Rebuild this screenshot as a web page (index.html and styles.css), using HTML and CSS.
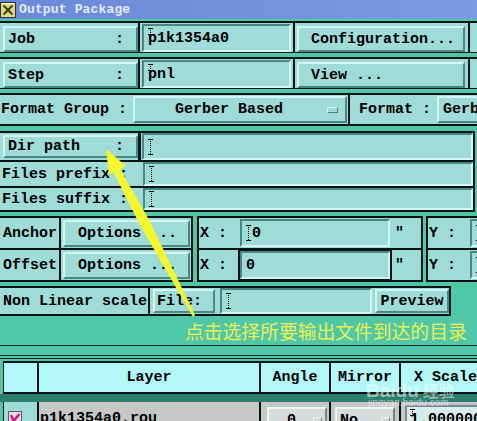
FILE: index.html
```html
<!DOCTYPE html>
<html>
<head>
<meta charset="utf-8">
<link rel="stylesheet" href="styles.css">
</head>
<body>
<div class="titlebar">
  <svg class="ticon" width="17" height="17" viewBox="0 0 17 17">
    <rect x="0.5" y="1.5" width="15" height="15" fill="#e2da74" stroke="#26324c"/>
    <path d="M1.5 2.5 H14.5" stroke="#fffbd0"/>
    <path d="M3.5 4.5 L12.5 13.5 M12.5 4.5 L3.5 13.5" stroke="#3c3c14" stroke-width="2"/>
  </svg>
  <span class="ttext">Output Package</span>
</div>

<div class="row r1">
  <div class="cell c-lbl"><div class="btn lbtn"><span>Job</span><span>:</span></div></div>
  <div class="cell c-fld"><div class="field tfield"><i class="caret over"></i>p1k1354a0</div></div>
  <div class="cell c-act"><div class="btn abtn">Configuration...</div></div>
  <div class="cell c-stub"></div>
</div>

<div class="row r2">
  <div class="cell c-lbl"><div class="btn lbtn"><span>Step</span><span>:</span></div></div>
  <div class="cell c-fld"><div class="field tfield"><i class="caret over"></i>pnl</div></div>
  <div class="cell c-act"><div class="btn abtn">View ...</div></div>
  <div class="cell c-stub"></div>
</div>

<div class="row fmt">
  <div class="cell fg">
    <span class="fglabel">Format Group :</span>
    <div class="btn opt"><span>Gerber Based</span><i class="ind"></i></div>
  </div>
  <div class="cell fm">
    <span class="fmlabel">Format :</span>
    <div class="btn opt2">Gerber Based</div>
  </div>
</div>

<div class="paths">
  <div class="prow dir">
    <div class="dirl"><div class="btn lbtn dbtn"><span>Dir path</span><span>:</span></div></div>
    <div class="field pf"><i class="caret"></i></div>
  </div>
  <div class="prow pre">
    <div class="pl">Files prefix :</div>
    <div class="field pf"><i class="caret"></i></div>
  </div>
  <div class="prow suf">
    <div class="pl">Files suffix :</div>
    <div class="field pf"><i class="caret"></i></div>
  </div>
</div>

<div class="anchors">
  <div class="ablock a1">
    <div class="arow"><div class="alabel">Anchor</div><div class="aopt"><div class="btn obtn">Options ...</div></div></div>
    <div class="arow"><div class="alabel">Offset</div><div class="aopt"><div class="btn obtn">Options ...</div></div></div>
  </div>
  <div class="ablock a2">
    <div class="arow"><span class="xl">X :</span><div class="field xf"><i class="caret"></i>0</div><span class="inch">"</span></div>
    <div class="arow"><span class="xl">X :</span><div class="field xf focus">0</div><span class="inch">"</span></div>
  </div>
  <div class="ablock a3">
    <div class="arow"><span class="yl">Y :</span><div class="field yf"><i class="caret"></i></div></div>
    <div class="arow"><span class="yl">Y :</span><div class="field yf"><i class="caret"></i></div></div>
  </div>
</div>

<div class="nls">
  <div class="nlabel">Non Linear scale</div>
  <div class="btn fbtn">File:</div>
  <div class="field nf"><i class="caret"></i></div>
  <div class="btn pbtn">Preview</div>
</div>

<div class="hint">点击选择所要输出文件到达的目录</div>

<div class="rule ra"></div>
<div class="rule rb"></div>
<div class="rule rc"></div>

<div class="thead">
  <div class="tc tc-chk"></div>
  <div class="tc tc-layer">Layer</div>
  <div class="tc tc-angle">Angle</div>
  <div class="tc tc-mirror">Mirror</div>
  <div class="tc tc-x">X Scale</div>
</div>
<div class="tgap"></div>
<div class="trow">
  <div class="td td-chk">
    <svg class="chk" width="14" height="14" viewBox="0 0 14 14">
      <rect x="0.5" y="0.5" width="13" height="13" fill="#e6dcea" stroke="#6a506a"/>
      <path d="M3 4 L5.5 10 L11.5 3" fill="none" stroke="#d8106a" stroke-width="2.4"/>
    </svg>
  </div>
  <div class="td td-layer">p1k1354a0.rou</div>
  <div class="td td-angle"><div class="btn gbtn abtn2">0<i class="ind gind"></i></div></div>
  <div class="td td-mirror"><div class="btn gbtn mbtn">No<i class="ind gind"></i></div></div>
  <div class="td td-x"><div class="field xsf"><i class="caret over"></i>1.000000</div></div>
</div>

<svg class="arrow" width="477" height="421" viewBox="0 0 477 421">
  <polygon points="106,149 126,166 109,175" fill="#f6f62c"/>
  <polygon points="120,169 149,220 195,315 193,317 140,225 114,173" fill="#f6f62c"/>
</svg>

<div class="wm"><span class="wm-b">Baidu</span><span class="wm-j">经验</span></div>
<div class="wm2">jingyan.baidu.com</div>
</body>
</html>
```

FILE: styles.css
```css
:root {
  --teal: #50c8a8;
  --panel: #9fdcd8;
  --hi: #d2f6f2;
  --sh: #4a8682;
  --blk: #081414;
}
* { box-sizing: border-box; }
body {
  margin: 0;
  width: 477px;
  height: 421px;
  overflow: hidden;
  position: relative;
  background: var(--teal);
  font: bold 15px "Liberation Mono", "DejaVu Sans Mono", monospace;
  color: #000;
}
i { font-style: normal; }

/* title bar */
.titlebar {
  height: 19px;
  display: flex;
  align-items: center;
  gap: 2px;
  background: linear-gradient(90deg, #6a8ad8, #7a9ae2);
  color: #e4eaff;
  font-size: 13px;
  letter-spacing: 0.15px;
}
.ticon { flex-shrink: 0; }

/* generic widgets */
.btn {
  display: flex;
  align-items: center;
  background: var(--panel);
  border: 2px solid;
  border-color: var(--hi) var(--sh) var(--sh) var(--hi);
  white-space: pre;
  flex-shrink: 0;
}
.field {
  display: flex;
  align-items: center;
  background: var(--panel);
  border: 2px solid;
  border-color: var(--sh) var(--hi) var(--hi) var(--sh);
  padding-left: 4px;
  white-space: pre;
  flex-shrink: 0;
}
.caret {
  display: inline-block;
  width: 5px;
  height: 16px;
  margin-right: 1px;
  background:
    linear-gradient(#000, #000) top / 5px 1px no-repeat,
    linear-gradient(#000, #000) bottom / 5px 1px no-repeat,
    repeating-linear-gradient(#000 0 1px, transparent 1px 2px) center / 1px 100% no-repeat;
}
.caret.over {
  height: 7px;
  align-self: flex-start;
  margin-top: 2px;
  margin-right: -5px;
}
.ind {
  position: absolute;
  width: 11px;
  height: 6px;
  background: var(--panel);
  border: 1px solid;
  border-color: var(--hi) var(--sh) var(--sh) var(--hi);
}

/* rows 1 and 2 */
.row {
  display: flex;
  background: var(--panel);
  border-top: 2px solid var(--blk);
  border-bottom: 1px solid var(--blk);
}
.r1 { margin-top: 2px; }
.r2 { margin-top: 4px; }
.cell {
  border-right: 2px solid var(--blk);
  flex-shrink: 0;
}
.c-lbl { width: 140px; padding: 3px 0 0 3px; }
.c-fld { width: 155px; padding: 1px 2px 0 2px; }
.c-act { width: 175px; padding: 3px 3px 0 2px; }
.c-stub { flex: 1; border-right: 0; }
.lbtn {
  height: 26px;
  justify-content: space-between;
  padding: 0 12px 0 3px;
}
.tfield { height: 28px; }
.abtn { height: 26px; padding-left: 12px; }

/* format group row */
.fmt {
  margin-top: 4px;
  border-bottom: 2px solid var(--blk);
  height: 33px;
}
.fg {
  width: 350px;
  display: flex;
  align-items: center;
  padding-left: 1px;
}
.fglabel { width: 132px; flex-shrink: 0; }
.opt {
  position: relative;
  width: 214px;
  height: 27px;
  padding-left: 40px;
}
.opt .ind { left: 192px; top: 9px; }
.fm {
  flex: 1;
  display: flex;
  align-items: center;
  padding-left: 9px;
  border-right: 0;
}
.fmlabel { width: 78px; flex-shrink: 0; }
.opt2 { width: 214px; height: 27px; padding-left: 4px; }

/* path rows */
.paths {
  margin-top: 5px;
  width: 475px;
  background: var(--panel);
  border-top: 2px solid var(--blk);
  border-right: 2px solid var(--blk);
}
.prow {
  display: flex;
  align-items: center;
  border-bottom: 2px solid var(--blk);
}
.dir { height: 29px; }
.pre { height: 26px; }
.suf { height: 24px; }
.dirl {
  width: 141px;
  height: 100%;
  border-right: 3px solid var(--blk);
  padding: 2px 0 0 3px;
  flex-shrink: 0;
}
.dbtn { height: 23px; }
.pl {
  width: 142px;
  padding-left: 2px;
  flex-shrink: 0;
}
.pf {
  flex: 1;
  height: 100%;
  margin-left: 1px;
}

/* anchor / offset */
.anchors { display: flex; margin-top: 4px; }
.ablock {
  background: var(--panel);
  border-top: 2px solid var(--blk);
  border-bottom: 2px solid var(--blk);
  flex-shrink: 0;
}
.arow {
  display: flex;
  align-items: center;
  height: 30px;
}
.arow + .arow { border-top: 2px solid var(--blk); height: 32px; }
.a1 { width: 193px; border-right: 2px solid var(--blk); }
.alabel {
  width: 61px;
  height: 100%;
  display: flex;
  align-items: center;
  padding-left: 3px;
  border-right: 2px solid var(--blk);
  flex-shrink: 0;
}
.aopt { padding: 0 1px 0 2px; }
.obtn { width: 127px; height: 27px; padding-left: 13px; }
.a2 {
  margin-left: 4px;
  width: 226px;
  border-left: 2px solid var(--blk);
  border-right: 2px solid var(--blk);
}
.xl { width: 41px; padding-left: 1px; flex-shrink: 0; }
.xf { width: 150px; height: 28px; }
.focus { box-shadow: 0 0 0 2px var(--blk); }
.inch { margin-left: 5px; }
.a3 {
  margin-left: 3px;
  flex: 1;
  border-left: 2px solid var(--blk);
}
.yl { width: 42px; padding-left: 1px; flex-shrink: 0; }
.yf { width: 60px; height: 28px; }

/* non linear scale */
.nls {
  margin-top: 4px;
  width: 451px;
  height: 30px;
  display: flex;
  align-items: center;
  background: var(--panel);
  border-top: 2px solid var(--blk);
  border-bottom: 2px solid var(--blk);
  border-right: 2px solid var(--blk);
}
.nlabel {
  width: 150px;
  height: 100%;
  display: flex;
  align-items: center;
  padding-left: 3px;
  border-right: 2px solid var(--blk);
  flex-shrink: 0;
}
.fbtn { margin-left: 3px; width: 62px; height: 24px; padding-left: 2px; }
.nf { margin-left: 5px; width: 152px; height: 26px; }
.pbtn { margin-left: 3px; width: 74px; height: 24px; justify-content: center; }

/* hint */
.hint {
  margin-top: 1px;
  padding-left: 185px;
  height: 24px;
  line-height: 24px;
  font: 400 18.8px "Noto Sans CJK SC", sans-serif;
  color: #eef052;
  white-space: nowrap;
}

/* rules */
.rule { height: 1px; background: #0c2424; }
.ra { margin-top: 4px; }
.rb { margin-top: 9px; }
.rc { margin-top: 2px; }

/* table */
.thead {
  display: flex;
  margin: 2px 0 0 3px;
  height: 33px;
  background: #b2f8f8;
  border-top: 2px solid var(--blk);
  border-left: 1px solid var(--blk);
  border-bottom: 2px solid var(--blk);
}
.tc {
  display: flex;
  align-items: center;
  justify-content: center;
  border-right: 2px solid var(--blk);
  flex-shrink: 0;
}
.tc-chk, .td-chk { width: 35px; }
.tc-layer, .td-layer { width: 222px; }
.tc-angle, .td-angle { width: 70px; }
.tc-mirror, .td-mirror { width: 70px; }
.tc-x { flex: 1; justify-content: flex-start; padding-left: 13px; border-right: 0; }
.tgap { height: 8px; background: #2e7e6e; }
.trow {
  display: flex;
  margin-left: 3px;
  height: 30px;
  background: #c6c8c8;
  border-left: 1px solid var(--blk);
}
.td {
  border-right: 2px solid var(--blk);
  flex-shrink: 0;
  height: 100%;
}
.td-chk { background: var(--panel); padding: 9px 0 0 4px; }
.chk { display: block; }
.td-layer { padding: 8px 0 0 1px; line-height: 17px; }
.gbtn {
  position: relative;
  width: 60px;
  height: 26px;
  margin-top: 5px;
  background: #d6dcdc;
  border-color: #f0f4f4 #7a8484 #7a8484 #f0f4f4;
}
.gind {
  background: #d6dcdc;
  border-color: #f0f4f4 #7a8484 #7a8484 #f0f4f4;
  width: 9px;
  top: 8px;
  left: 44px;
}
.abtn2 { margin-left: 6px; padding-left: 18px; }
.mbtn { margin-left: 4px; padding-left: 3px; }
.td-x { flex: 1; border-right: 0; padding: 3px 0 0 4px; }
.xsf {
  height: 28px;
  background: #d8ecec;
  border-color: #7a8888 #f0f8f8 #f0f8f8 #7a8888;
  padding-left: 3px;
}

/* overlays */
.arrow {
  position: absolute;
  left: 0;
  top: 0;
  pointer-events: none;
}
.wm {
  position: absolute;
  left: 366px;
  top: 378px;
  color: rgba(255, 255, 255, 0.55);
  font: bold 19px "Liberation Sans", sans-serif;
  white-space: nowrap;
}
.wm-j { font: 500 16px "Noto Sans CJK SC", sans-serif; margin-left: 4px; }
.wm2 {
  position: absolute;
  left: 368px;
  top: 397px;
  color: rgba(255, 255, 255, 0.55);
  font: 400 10px "Liberation Sans", sans-serif;
  white-space: nowrap;
}
```
